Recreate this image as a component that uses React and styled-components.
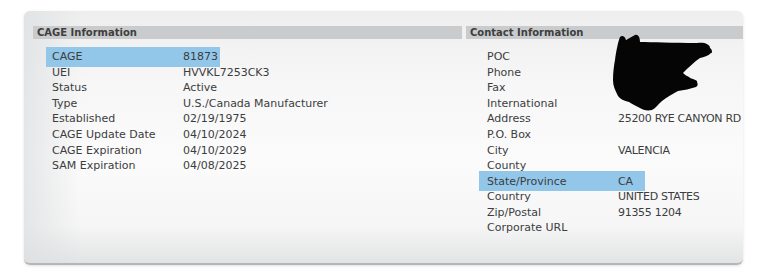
import React from "react";
import styled, { createGlobalStyle } from "styled-components";

const GlobalStyle = createGlobalStyle`
  html, body {
    margin: 0;
    padding: 0;
    background: #ffffff;
  }
  body {
    font-family: "DejaVu Sans", Verdana, sans-serif;
  }
`;

const Page = styled.div`
  width: 757px;
  height: 280px;
  padding: 11px 0 0 24px;
  box-sizing: border-box;
  overflow: hidden;
`;

const Panel = styled.div`
  position: relative;
  width: 719px;
  height: 254px;
  box-sizing: border-box;
  padding: 15px 0 0 9px;
  border-radius: 6px;
  overflow: hidden;
  border-bottom: 2px solid #b4b6b8;
  background:
    linear-gradient(to right, rgba(220, 222, 224, 0.7) 0%, rgba(255, 255, 255, 0) 8%),
    linear-gradient(to bottom, #eeeeee 0%, #f7f7f7 30%, #fbfbfb 60%, #f6f6f6 85%, #e2e3e4 100%);
  box-shadow: 0 1px 3px rgba(0, 0, 0, 0.12);
`;

const Columns = styled.div`
  display: grid;
  grid-template-columns: 429px 1fr;
  column-gap: 4px;
`;

const Section = styled.div`
  display: flex;
  flex-direction: column;
`;

const SectionTitle = styled.div`
  height: 13px;
  line-height: 13px;
  background: #c9cbcd;
  color: #3e3e3e;
  font-size: 10px;
  font-weight: bold;
  padding-left: 4px;
  white-space: nowrap;
`;

const Rows = styled.div`
  display: flex;
  flex-direction: column;
  padding: 10px 0 0 13px;
`;

const Row = styled.div`
  display: flex;
  align-items: center;
  height: 15.55px;
  width: ${(p) => (p.$mark ? `${p.$mark}px` : "auto")};
  padding-left: ${(p) => p.$pad}px;
  font-size: 11px;
  color: #3c3d3e;
  white-space: nowrap;
  background: ${(p) => (p.$mark ? "#93c7ea" : "transparent")};
  margin: ${(p) => (p.$mark ? "-2px 0" : "0")};
  padding-top: ${(p) => (p.$mark ? "2px" : "0")};
  padding-bottom: ${(p) => (p.$mark ? "2px" : "0")};
  box-sizing: content-box;
`;

const Label = styled.span`
  width: ${(p) => p.$w}px;
  flex: none;
`;

const Value = styled.span`
  letter-spacing: ${(p) => (p.$tight ? "-0.3px" : "0")};
`;

const Redaction = styled.svg`
  position: absolute;
  left: 588px;
  top: 21px;
`;

const cage = [
  ["CAGE", "81873"],
  ["UEI", "HVVKL7253CK3"],
  ["Status", "Active"],
  ["Type", "U.S./Canada Manufacturer"],
  ["Established", "02/19/1975"],
  ["CAGE Update Date", "04/10/2024"],
  ["CAGE Expiration", "04/10/2029"],
  ["SAM Expiration", "04/08/2025"],
];

const contact = [
  ["POC", ""],
  ["Phone", ""],
  ["Fax", ""],
  ["International", ""],
  ["Address", "25200 RYE CANYON RD"],
  ["P.O. Box", ""],
  ["City", "VALENCIA"],
  ["County", ""],
  ["State/Province", "CA"],
  ["Country", "UNITED STATES"],
  ["Zip/Postal", "91355 1204"],
  ["Corporate URL", ""],
];

const App = () => {
  return (
    <Page>
      <GlobalStyle />
      <Panel>
        <Columns>
          <Section>
            <SectionTitle>CAGE Information</SectionTitle>
            <Rows>
              {cage.map(([k, v]) => (
                <Row key={k} $pad={6} $mark={k === "CAGE" ? 168 : 0}>
                  <Label $w={131}>{k}</Label>
                  <Value>{v}</Value>
                </Row>
              ))}
            </Rows>
          </Section>
          <Section>
            <SectionTitle>Contact Information</SectionTitle>
            <Rows>
              {contact.map(([k, v]) => (
                <Row key={k} $pad={8} $mark={k === "State/Province" ? 158 : 0}>
                  <Label $w={131}>{k}</Label>
                  <Value $tight>{v}</Value>
                </Row>
              ))}
            </Rows>
          </Section>
        </Columns>
        <Redaction width="105" height="82" viewBox="0 0 105 82">
          <path
            fill="#050505"
            d="M8 5 C10 3 13 4 14 8 L23 3 C26 2 28 5 28 10 C40 10 60 11 85 11 C92 10 98 12 98 16 C101 18 100 22 99 21 C96 24 92 25 88 26 C82 30 76 36 71 41 C74 44 78 45 78 46 C82 47 86 49 85 50 C86 52 86 54 84 55 C78 57 72 58 66 59 C60 62 54 66 50 69 C46 72 44 76 40 78 C35 79 31 78 28 76 C24 74 20 72 17 70 C12 69 8 67 6 64 C3 58 1 54 1 48 C1 40 2 33 3 28 C4 20 6 10 8 5 Z"
          />
        </Redaction>
      </Panel>
    </Page>
  );
};

export default App;
